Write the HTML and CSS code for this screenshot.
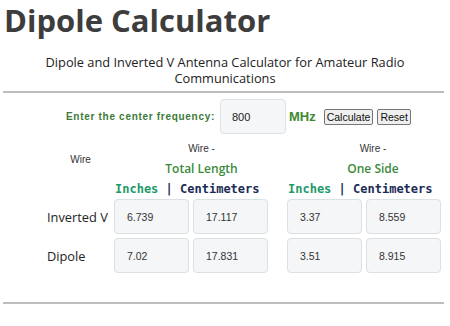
FILE: index.html
```html
<!DOCTYPE html>
<html lang="en">
<head>
    <meta charset="UTF-8">
    <title>Dipole Calculator</title>
    <link rel="stylesheet" href="styles.css">
</head>
<body>
    <h1 class="title">Dipole Calculator</h1>
    <p class="subtitle">Dipole and Inverted V Antenna Calculator for Amateur Radio Communications</p>
    <hr class="rule">

    <div class="freq-row">
        <label class="freq-label" for="freq">Enter the center frequency:</label>
        <input class="freq-input" id="freq" type="text" value="800">
        <span class="unit">MHz</span>
        <button class="btn">Calculate</button>
        <button class="btn">Reset</button>
    </div>

    <div class="results">
        <div class="wire-head">Wire</div>
        <div class="group-head">
            <div class="group-wire">Wire -</div>
            <div class="group-name">Total Length</div>
        </div>
        <div class="group-head group-right">
            <div class="group-wire">Wire -</div>
            <div class="group-name">One Side</div>
        </div>

        <div class="units"><span class="in">Inches</span> | <span class="cm">Centimeters</span></div>
        <div class="units units-right"><span class="in">Inches</span> | <span class="cm">Centimeters</span></div>

        <div class="row-label">Inverted V</div>
        <div class="cell">6.739</div>
        <div class="cell">17.117</div>
        <div></div>
        <div class="cell">3.37</div>
        <div class="cell">8.559</div>

        <div class="row-label">Dipole</div>
        <div class="cell">7.02</div>
        <div class="cell">17.831</div>
        <div></div>
        <div class="cell">3.51</div>
        <div class="cell">8.915</div>
    </div>

    <hr class="rule rule-bottom">
</body>
</html>
```

FILE: styles.css
```css
* {
    margin: 0;
    padding: 0;
    box-sizing: border-box;
}

body {
    font-family: 'Open Sans', sans-serif;
    color: #222;
    background: #fff;
    width: 450px;
}

.title {
    font-family: 'Open Sans', sans-serif;
    font-weight: 700;
    font-size: 31px;
    line-height: 42px;
    color: #3d3d3d;
    padding-left: 4px;
    margin-top: -1px;
}

.subtitle {
    text-align: center;
    font-size: 12.8px;
    line-height: 16px;
    margin-top: 13px;
    padding: 0 40px;
}

.rule {
    border: none;
    height: 2px;
    background: #bdbdbd;
    margin: 5px 6px 0 3px;
}

.freq-row {
    display: flex;
    align-items: center;
    padding-left: 66px;
    margin-top: 6px;
}

.freq-label {
    font-family: 'Liberation Sans', sans-serif;
    font-weight: 700;
    font-size: 10px;
    letter-spacing: 0.7px;
    color: #3c7a37;
}

.freq-input {
    width: 66px;
    height: 35px;
    margin-left: 5px;
    padding-left: 11px;
    font-family: 'Liberation Sans', sans-serif;
    font-size: 11px;
    color: #222;
    background: #f4f6f8;
    border: 1px solid #dde2e6;
    border-radius: 4px;
    outline: none;
}

.unit {
    font-family: 'Liberation Sans', sans-serif;
    font-weight: 700;
    font-size: 13px;
    color: #3d8a2e;
    margin-left: 3px;
    margin-right: 8px;
}

.btn {
    font-family: 'Liberation Sans', sans-serif;
    font-size: 10.5px;
    height: 16px;
    padding: 0 2px;
    margin-right: 4px;
    color: #111;
    background: #efefef;
    border: 1px solid #767676;
    border-radius: 2px;
}

.results {
    display: grid;
    grid-template-columns: 63px 75px 75px 11px 75px 75px;
    column-gap: 4px;
    row-gap: 4px;
    margin-left: 47px;
    margin-top: 8px;
}

.wire-head {
    font-family: 'Liberation Sans', sans-serif;
    font-size: 10px;
    color: #333;
    text-align: center;
    align-self: center;
    padding-left: 4px;
}

.group-head {
    grid-column: 2 / 5;
    text-align: center;
    padding-left: 6px;
}

.group-right {
    grid-column: 5 / 7;
    padding-left: 18px;
}

.group-wire {
    font-family: 'Liberation Sans', sans-serif;
    font-size: 10px;
    line-height: 14px;
    color: #333;
}

.group-name {
    font-size: 12px;
    font-weight: 600;
    line-height: 16px;
    margin-top: 5px;
    color: #3b8a3b;
}

.units {
    grid-column: 2 / 5;
    font-family: 'DejaVu Sans Mono', monospace;
    font-weight: 700;
    font-size: 12px;
    line-height: 16px;
    color: #1b2b55;
    padding-left: 1px;
    margin-bottom: -2px;
}

.units-right {
    grid-column: 5 / 7;
}

.units .in {
    color: #1e9a6a;
}

.units .cm {
    color: #1b2b55;
}

.row-label {
    font-size: 12.8px;
    color: #222;
    align-self: center;
}

.cell {
    height: 35px;
    display: flex;
    align-items: center;
    padding-left: 12px;
    font-family: 'Liberation Sans', sans-serif;
    font-size: 10.5px;
    color: #333;
    background: #f4f6f8;
    border: 1px solid #dbe0e3;
    border-radius: 4px;
}

.rule-bottom {
    margin-top: 29px;
}
```
